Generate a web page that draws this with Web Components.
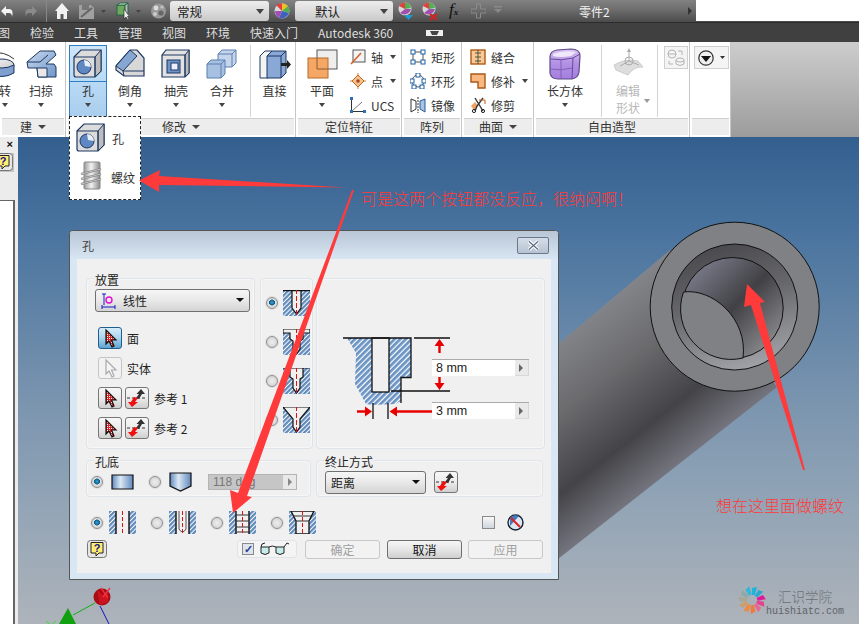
<!DOCTYPE html>
<html>
<head>
<meta charset="utf-8">
<style>
  html,body{margin:0;padding:0;}
  body{
    width:859px;height:624px;overflow:hidden;position:relative;
    display:flex;flex-direction:column;
    font:12px "Noto Sans CJK SC","Liberation Sans",sans-serif;color:#333;
  }
</style>
</head>
<body>
<cad-titlebar>
  <cad-icon name="undo" style="margin-left:0"></cad-icon>
  <cad-icon name="redo" style="margin-left:11px"></cad-icon>
  <span style="margin-left:8px;width:1px;height:22px;background:#888"></span>
  <cad-icon name="home" style="margin-left:8px"></cad-icon>
  <cad-icon name="save" style="margin-left:9px"></cad-icon>
  <cad-icon name="dd" style="margin-left:6px"></cad-icon>
  <cad-icon name="box" style="margin-left:10px"></cad-icon>
  <cad-icon name="dd" style="margin-left:7px"></cad-icon>
  <cad-icon name="ball" style="margin-left:10px"></cad-icon>
  <tb-combo style="margin-left:4px;width:99px;padding-left:7px">常规</tb-combo>
  <cad-icon name="wheel" style="margin-left:5px"></cad-icon>
  <tb-combo style="margin-left:5px;width:98px;padding-left:20px">默认</tb-combo>
  <cad-icon name="wheel2" style="margin-left:5px"></cad-icon>
  <cad-icon name="wheel3" style="margin-left:8px"></cad-icon>
  <cad-icon name="fx" style="margin-left:11px"></cad-icon>
  <cad-icon name="plus" style="margin-left:10px"></cad-icon>
  <cad-icon name="ddline" style="margin-left:8px"></cad-icon>
  <span style="margin-left:77px;width:32px;flex:none;white-space:nowrap;color:#f2f2f2">零件2</span>
  <cad-icon name="tri" style="margin-left:77px"></cad-icon>
</cad-titlebar>

<cad-tabs>
  <span style="margin-left:-2px">图</span><span>检验</span><span>工具</span><span>管理</span><span>视图</span><span>环境</span><span>快速入门</span><span>Autodesk 360</span>
  <cad-icon name="tabcam" style="margin-left:12px"></cad-icon>
</cad-tabs>

<cad-ribbon>
  <rb-panel label="建" dropdown style="width:66px" align="end">
    <rb-big label="转" arrow width="28"><cad-icon name="revolve"></cad-icon></rb-big>
    <rb-big label="扫掠" arrow width="44" style="margin-right:2px"><cad-icon name="sweep"></cad-icon></rb-big>
  </rb-panel>
  <rb-panel label="修改" dropdown style="width:230px">
    <rb-big label="孔" arrow width="38" active style="margin-left:3px"><cad-icon name="hole"></cad-icon></rb-big>
    <rb-big label="倒角" arrow width="46"><cad-icon name="chamfer"></cad-icon></rb-big>
    <rb-big label="抽壳" arrow width="46"><cad-icon name="shell"></cad-icon></rb-big>
    <rb-big label="合并" arrow width="46"><cad-icon name="combine"></cad-icon></rb-big>
    <rb-sep></rb-sep>
    <rb-big label="直接" width="43"><cad-icon name="direct"></cad-icon></rb-big>
  </rb-panel>
  <rb-panel label="定位特征" style="width:106px">
    <rb-big label="平面" arrow width="52"><cad-icon name="plane"></cad-icon></rb-big>
    <rb-col style="margin-left:2px">
      <rb-small label="轴" arrow><cad-icon name="axis"></cad-icon></rb-small>
      <rb-small label="点" arrow><cad-icon name="point"></cad-icon></rb-small>
      <rb-small label="UCS"><cad-icon name="ucs"></cad-icon></rb-small>
    </rb-col>
  </rb-panel>
  <rb-panel label="阵列" style="width:60px" pad="8">
    <rb-col>
      <rb-small label="矩形"><cad-icon name="rect"></cad-icon></rb-small>
      <rb-small label="环形"><cad-icon name="circ"></cad-icon></rb-small>
      <rb-small label="镜像"><cad-icon name="mirror"></cad-icon></rb-small>
    </rb-col>
  </rb-panel>
  <rb-panel label="曲面" dropdown style="width:72px" pad="8">
    <rb-col>
      <rb-small label="缝合"><cad-icon name="stitch"></cad-icon></rb-small>
      <rb-small label="修补" arrow><cad-icon name="patch"></cad-icon></rb-small>
      <rb-small label="修剪"><cad-icon name="trim"></cad-icon></rb-small>
    </rb-col>
  </rb-panel>
  <rb-panel label="自由造型" style="width:156px">
    <rb-big label="长方体" arrow width="62"><cad-icon name="freebox"></cad-icon></rb-big>
    <rb-sep></rb-sep>
    <rb-big label="编辑" second="形状" disabled width="48"><cad-icon name="editform"></cad-icon></rb-big>
    <rb-sep></rb-sep>
    <rb-tool style="margin-left:4px;width:24px"><cad-icon name="convert"></cad-icon></rb-tool>
  </rb-panel>
  <rb-panel label="&nbsp;" style="width:41px">
    <rb-tool style="margin-left:4px;width:35px"><cad-icon name="more"></cad-icon></rb-tool>
  </rb-panel>
</cad-ribbon>

<cad-workspace>
  <hole-dialog></hole-dialog>
</cad-workspace>

<rb-menu></rb-menu>
<anno-layer></anno-layer>

<script>
const OUT = '#1c3660';
const FACE = `<linearGradient id="f" x1="0" y1="0" x2="1" y2="1"><stop offset="0" stop-color="#f4f4f4"/><stop offset="1" stop-color="#c8c8c8"/></linearGradient>
  <linearGradient id="b" x1="0" y1="0" x2="1" y2="1"><stop offset="0" stop-color="#c9d9ee"/><stop offset="1" stop-color="#6f95c8"/></linearGradient>`;
const svg = (w, h, body, vb) => `<svg width="${w}" height="${h}" viewBox="${vb || `0 0 ${w} ${h}`}" xmlns="http://www.w3.org/2000/svg"><defs>${FACE}</defs>${body}</svg>`;
const HATCH = `<pattern id="h" width="3.2" height="3.2" patternUnits="userSpaceOnUse" patternTransform="rotate(45)"><rect width="3.2" height="3.2" fill="#fff"/><rect width="2.2" height="3.2" fill="#5f8abb"/></pattern>`;
const PICK = (c1, c2) => `<path d="M5 2 L5 16 L8 13 L11 19 L13 18 L10.5 12 L15 12 Z" fill="${c1}" stroke="${c2}" stroke-width="1.2"/>`;

const ICONS = {
  undo: svg(14, 22, `<path d="M6 6 L1 11 L6 16 V13 H9 Q12 13 12 17 Q14 9 9 9 H6Z" fill="#f4f4f4"/>`),
  redo: svg(13, 22, `<path d="M7 6 L12 11 L7 16 V13 H4 Q1 13 1 17 Q-1 9 4 9 H7Z" fill="#8a8a8a"/>`),
  home: svg(14, 22, `<path d="M7 3 L14 11 H12 V19 H8.5 V14 H5.5 V19 H2 V11 H0Z" fill="#f2f2f2"/>`),
  save: svg(17, 22, `<path d="M1 5 H13 L16 8 V19 H1Z" fill="#a0a0a0"/><rect x="4" y="5" width="7" height="5" fill="#777"/><path d="M3 17 L14 8" stroke="#666" stroke-width="2"/>`),
  dd: svg(5, 22, `<path d="M0 10 H5 L2.5 13Z" fill="#444"/>`),
  ddline: svg(8, 22, `<path d="M0 6 H8 V7.5 H0Z M0 9 H8 L4 13Z" fill="#888"/>`),
  tri: svg(5, 22, `<path d="M0 7 L4 11 L0 15Z" fill="#333"/>`),
  box: svg(13, 22, `<rect x="1" y="5" width="8" height="10" fill="#70a860" stroke="#264"/><path d="M1 5 L4 3 H12 L9 5Z" fill="#dce8d0" stroke="#264"/><path d="M9 5 L12 3 V13 L9 15Z" fill="#bbb" stroke="#264"/><path d="M8 9 V19 L10 17 L12 20 L13 19 L11.5 16.5 H13.5Z" fill="#eee" stroke="#222" stroke-width=".6"/>`),
  ball: svg(15, 22, `<circle cx="7.5" cy="11" r="7.5" fill="#999"/><circle cx="5" cy="8" r="2.4" fill="#ddd"/><circle cx="10" cy="13" r="2.6" fill="#666"/><circle cx="4" cy="14" r="2" fill="#ccc"/><circle cx="11" cy="7" r="1.6" fill="#c4c4c4"/>`),
  wheel: svg(16, 22, `<circle cx="8" cy="11" r="7.5" fill="#d8d8d8"/><path d="M8 11 L2 5 A8 8 0 0 1 8 3.5Z" fill="#e04040"/><path d="M8 11 V3.5 A8 8 0 0 1 14 6Z" fill="#f0c020"/><path d="M8 11 L14 6 A8 8 0 0 1 15 13Z" fill="#50b050"/><path d="M8 11 L15 13 A8 8 0 0 1 5 18Z" fill="#4060c0"/><path d="M8 11 L5 18 A8 8 0 0 1 1 11Z" fill="#a050b0"/>`),
  wheel2: svg(15, 22, `<circle cx="7" cy="9" r="6.5" fill="#d8d8d8"/><path d="M7 9 L1 6 A7 7 0 0 1 7 2.5Z" fill="#e04040"/><path d="M7 9 V2.5 A7 7 0 0 1 13 8Z" fill="#50b050"/><path d="M7 9 H13 A7 7 0 0 1 2 13Z" fill="#a050b0"/><path d="M6 15 H15 L10.5 20Z" fill="#1e9ad0"/>`),
  wheel3: svg(17, 22, `<circle cx="8" cy="9" r="6.5" fill="#d8d8d8"/><path d="M8 9 L2 6 A7 7 0 0 1 8 2.5Z" fill="#e04040"/><path d="M8 9 V2.5 A7 7 0 0 1 14 8Z" fill="#50b050"/><path d="M8 9 H14 A7 7 0 0 1 3 13Z" fill="#a050b0"/><path d="M9 14 L16 20 M16 14 L9 20" stroke="#d82020" stroke-width="2"/>`),
  fx: `<span style="font:italic 17px 'Liberation Serif',serif;color:#111;width:12px;line-height:20px;white-space:nowrap">f<span style="font-size:9px;font-weight:bold">x</span></span>`,
  plus: svg(15, 22, `<path d="M5.5 4 H9.5 V9 H15 V13 H9.5 V18 H5.5 V13 H0 V9 H5.5Z" fill="none" stroke="#8a8a8a"/>`),
  tabcam: svg(19, 10, `<path d="M1 2 H18 V8 H1Z" fill="#eee" rx="2"/><path d="M5 3 H14 L12 7 H7Z" fill="#444"/>`),

  revolve: svg(30, 30, `<g transform="translate(10,0)"><ellipse cx="2" cy="16" rx="12" ry="6" fill="url(#f)" stroke="${OUT}"/><path d="M-10 16 V24 Q2 31 14 24 V16 Q2 22 -10 16Z" fill="#7f9fcf" stroke="${OUT}"/><path d="M-8 4 Q4 2 14 10" fill="none" stroke="#333"/></g>`),
  sweep: svg(31, 30, `<path d="M1 13 L14 2 H28 L30 6 L20 15 H28 L30 18 V28 H12 L11 19 H2Z" fill="url(#b)" stroke="${OUT}"/><path d="M11 19 H21 V28 H12Z" fill="#e8e8e8" stroke="${OUT}"/><path d="M1 13 H14 L22 6" fill="none" stroke="${OUT}"/>`),
  hole: svg(30, 30, `<path d="M1 8 L8 1 H28 V22 L22 28 H3 Q1 28 1 26Z" fill="#dcdcdc" stroke="${OUT}" stroke-width="1.2"/><path d="M22 8 L28 1 V22 L22 28Z" fill="#bdbdbd" stroke="${OUT}"/><path d="M1 8 H22 V28" fill="none" stroke="${OUT}"/><circle cx="11" cy="18" r="7" fill="#5f87c3" stroke="${OUT}"/><path d="M11 11 A7 7 0 0 1 18 18 L12 17Z" fill="#e8eef6"/>`),
  chamfer: svg(30, 30, `<path d="M1 17 L15 1 H22 L29 9 V27 H9 L1 21Z" fill="#d8d8d8" stroke="${OUT}" stroke-width="1.2"/><path d="M1 17 L15 1 L22 7 L8 22Z" fill="#88a6d2" stroke="${OUT}"/><path d="M8 22 H29 M8 22 L9 27" fill="none" stroke="${OUT}"/>`),
  shell: svg(30, 30, `<path d="M1 6 L5 1 H28 V24 L24 28 H1Z" fill="#e2e2e2" stroke="${OUT}" stroke-width="1.2"/><path d="M24 6 L28 1 V24 L24 28Z" fill="#bcbcbc" stroke="${OUT}"/><path d="M1 6 H24 V28" fill="none" stroke="${OUT}"/><rect x="6" y="11" width="13" height="13" fill="#6f95c8" stroke="${OUT}"/><rect x="10" y="14" width="7" height="7" fill="#eef" stroke="${OUT}"/>`),
  combine: svg(32, 30, `<path d="M12 5 L16 1 H30 V14 L26 18 H12Z" fill="#c5d6ec" stroke="#5a7fb0"/><path d="M1 15 L5 11 H19 V25 L15 29 H1Z" fill="#a6c0e2" stroke="#5a7fb0"/><path d="M1 15 H15 V29 M15 15 L19 11 M12 5 H26 V18 M26 5 L30 1" fill="none" stroke="#5a7fb0"/>`),
  direct: svg(32, 30, `<path d="M1 7 L6 2 H13 L9 7 V29 H1Z" fill="#f4f4f4" stroke="${OUT}"/><path d="M8 7 L13 2 H27 V24 L22 29 H8Z" fill="#89a8d6" stroke="${OUT}"/><path d="M8 7 H22 V29 M22 7 L27 2" fill="none" stroke="${OUT}"/><path d="M22 14 H28 V11 L32 15.5 L28 20 V17 H22Z" fill="#222"/>`),
  plane: svg(31, 30, `<rect x="10" y="1" width="20" height="19" fill="#eee" stroke="#555"/><rect x="1" y="9" width="20" height="20" fill="#f5a765" stroke="#b86a28"/><path d="M10 9 V20 H21" fill="none" stroke="#8a5a30"/>`),
  axis: svg(16, 16, `<rect x="3" y="1" width="12" height="12" fill="#f4f4f4" stroke="#555"/><path d="M1 15 L11 4" stroke="#d8622a" stroke-width="1.6"/>`),
  point: svg(16, 18, `<path d="M8 1 V17 M0 9 H16" stroke="#e08030" stroke-width="1"/><path d="M8 3 L14 9 L8 15 L2 9Z" fill="#f5c090" stroke="#c06820"/><circle cx="8" cy="9" r="1.8" fill="#a84818"/>`),
  ucs: svg(16, 16, `<path d="M1.5 1 V14.5 H15" fill="none" stroke="#333"/><path d="M2 14 L12 5" stroke="#777"/><rect x="0" y="0" width="3" height="3" fill="#2a6fb8"/><rect x="0" y="13" width="3" height="3" fill="#2a6fb8"/><rect x="13" y="13" width="3" height="3" fill="#2a6fb8"/>`),
  rect: svg(16, 16, `<path d="M3 3 H13 M3 13 H13 M3 3 V13 M13 3 V13" stroke="#555"/><g fill="#fff" stroke="#1c5fa8"><rect x="1" y="1" width="4" height="4"/><rect x="11" y="1" width="4" height="4"/><rect x="1" y="11" width="4" height="4"/><rect x="11" y="11" width="4" height="4"/></g>`),
  circ: svg(16, 16, `<circle cx="8" cy="8" r="6" fill="none" stroke="#555"/><g fill="#fff" stroke="#1c5fa8"><rect x="6" y="0" width="4" height="4"/><rect x="0" y="6" width="4" height="4"/><rect x="12" y="6" width="4" height="4"/><rect x="2" y="12" width="4" height="4"/><rect x="10" y="12" width="4" height="4"/></g>`),
  mirror: svg(16, 16, `<path d="M1 2 L6 4 V12 L1 15Z" fill="#fff" stroke="#333"/><path d="M15 2 L10 4 V12 L15 15Z" fill="#a8c4e6" stroke="#2a5a98"/><path d="M8 0 V16" stroke="#333" stroke-dasharray="2 1"/>`),
  stitch: svg(16, 16, `<rect x="1" y="1" width="14" height="14" fill="#f8c898" stroke="#b05a18" stroke-width="1.4"/><path d="M8 1 V15 M5 4 H11 M5 8 H11 M5 12 H11" stroke="#553"/>`),
  patch: svg(16, 16, `<path d="M1 1 H15 V15 H8 V9 H1Z" fill="#f8b880" stroke="#a85a18" stroke-width="1.4"/>`),
  trim: svg(16, 16, `<path d="M1 9 L5 5 L8 9 L4 13Z" fill="#f0a060"/><path d="M5 1 L13 14 M13 1 L7 9 L5 14" fill="none" stroke="#333" stroke-width="1.4"/><circle cx="13" cy="14" r="1.6" fill="none" stroke="#222"/><circle cx="4" cy="14" r="1.6" fill="none" stroke="#222"/><path d="M9 3 H15 V7" fill="none" stroke="#c06020"/>`),
  freebox: svg(32, 32, `<linearGradient id="p" x1="0" y1="0" x2="0" y2="1"><stop offset="0" stop-color="#d8c6f2"/><stop offset=".45" stop-color="#b492e6"/><stop offset="1" stop-color="#a47ee0"/></linearGradient><path d="M1 9 Q1 3 8 2 L22 1 Q31 1 31 8 L30 24 Q29 30 23 31 L9 31 Q2 31 1 25Z" fill="url(#p)" stroke="#5d4a86" stroke-width="1.2"/><path d="M2 11 Q12 13 24 10 L31 6 M24 10 L23 31" fill="none" stroke="#6a4a9a"/><path d="M1 21 Q12 23 23 20 M12 12 V31" fill="none" stroke="#7f63ad"/><path d="M4 6 Q14 2 27 4 L22 8 Q11 10 4 8Z" fill="#efe8fa"/>`),
  editform: svg(32, 32, `<path d="M2 17 Q14 10 26 13 L31 19 Q22 18 16 27 L4 22Z" fill="#ddd" stroke="#ccc"/><circle cx="17" cy="13" r="4" fill="none" stroke="#aaa"/><path d="M17 2 V13 M17 13 L8 18 M17 13 L27 17" stroke="#aaa"/><path d="M15 4 L17 0 L19 4Z" fill="#aaa"/>`),
  convert: svg(20, 20, `<g fill="none" stroke="#b4b4b4"><circle cx="6" cy="6" r="4"/><path d="M2 6 H10"/><ellipse cx="14" cy="12" rx="4" ry="2"/><path d="M10 12 V16 Q14 19 18 16 V12"/><path d="M12 3 H16 V7 M3 13 V16 H7"/></g>`),
  more: `<span style="display:inline-flex;align-items:center;gap:6px">${svg(16, 16, `<circle cx="8" cy="8" r="7.2" fill="#eee" stroke="#333" stroke-width="1.2"/><path d="M3 6 H13 L8 12Z" fill="#111"/>`)}<svg width="5" height="3"><path d="M0 0 H5 L2.5 3Z" fill="#333"/></svg></span>`,
  thread: svg(22, 30, `<defs><linearGradient id="c"><stop offset="0" stop-color="#999"/><stop offset=".45" stop-color="#f2f2f2"/><stop offset="1" stop-color="#8a8a8a"/></linearGradient></defs><rect x="4" y="1" width="16" height="27" rx="1" fill="url(#c)" stroke="#888"/><path d="M1 13 L21 8 M1 18 L21 13 M1 23 L21 18" stroke="#777" stroke-width="2.2"/><path d="M1 13 L21 8 M1 18 L21 13 M1 23 L21 18" stroke="#ddd" stroke-width=".8"/>`),

  pick: svg(18, 20, `<pattern id="r" width="2" height="2" patternUnits="userSpaceOnUse"><rect width="2" height="2" fill="#e02020"/><rect width="1" height="1" fill="#fff"/></pattern>${PICK('url(#r)', '#111')}`),
  pickoff: svg(18, 20, PICK('#f4f4f4', '#aaa')),
  flip: svg(20, 20, `<path d="M0 10 H20" stroke="#333" stroke-dasharray="3 2"/><path d="M9 10 L12 6 H9.5 L14 1 L18 6 H15 L12 11Z" fill="#333"/><path d="M11 10 L8 14 H11 L5 19 L1 14 H4 L7 9Z" fill="#ee1010"/>`),
  linear: svg(16, 16, `<path d="M1 1 H5 M3 1 V12 M1 14 H14 M1 12 V16 M14 12 V16" stroke="#1818c8" fill="none"/><circle cx="8" cy="7" r="3" fill="none" stroke="#e010d0" stroke-width="1.4"/>`),
  help: svg(20, 18, `<rect x=".5" y=".5" width="19" height="17" rx="3" fill="#e6e6e6" stroke="#777"/><path d="M4 2.5 H16 V13 H12 L9 16 V13 H4Z" fill="#ffee70" stroke="#222"/><text x="10" y="11.5" text-anchor="middle" font-family="Liberation Sans" font-weight="bold" font-size="11" fill="#14148c">?</text>`),
  glasses: svg(30, 14, `<path d="M9 5 Q12 3 16 5 M24 5 L27 1 L29 2" fill="none" stroke="#222"/><path d="M1 5 H9 V11 Q5 14 1 11Z M16 5 H24 V11 Q20 14 16 11Z" fill="#c8ecec" stroke="#222"/><path d="M1 5 Q1 1 5 1" fill="none" stroke="#222"/>`),
  nothrough: svg(17, 17, `<circle cx="8.5" cy="8.5" r="7.5" fill="#dbe6f2" stroke="#123" stroke-width="1.4"/><path d="M3 4 A7 7 0 0 1 12 2 L3 12Z" fill="#4a78b8"/><path d="M4 4 L13 13" stroke="#e02020" stroke-width="2"/>`),

  flat: svg(23, 16, `<linearGradient id="g"><stop offset="0" stop-color="#5f89bd"/><stop offset=".4" stop-color="#dce8f4"/><stop offset="1" stop-color="#5f89bd"/></linearGradient><path d="M1 1 H22 V15 H1Z" fill="url(#g)" stroke="#111" stroke-width="1.2"/>`),
  drill: svg(23, 20, `<linearGradient id="g"><stop offset="0" stop-color="#5f89bd"/><stop offset=".4" stop-color="#dce8f4"/><stop offset="1" stop-color="#5f89bd"/></linearGradient><path d="M1 1 H22 V14 L11.5 19 L1 14Z" fill="url(#g)" stroke="#111" stroke-width="1.2"/>`),

  h1: svg(27, 26, `${HATCH}<rect width="27" height="26" fill="url(#h)"/><path d="M0 .6 H27 M9 0 V18 L13.5 24 L18 18 V0Z" fill="#f0f0f0" stroke="#111" stroke-width="1.2"/><path d="M13.5 -1 V26" stroke="#e01010" stroke-dasharray="5 2"/>`),
  h2: svg(27, 26, `${HATCH}<rect width="27" height="26" fill="url(#h)"/><path d="M0 0 H27 V4 H20 V10 L17 12 V20 L13.5 25 L10 20 V12 L7 10 V4 H0Z" fill="#f0f0f0" stroke="#111" stroke-width="1.2"/><path d="M13.5 -1 V26" stroke="#e01010" stroke-dasharray="5 2"/>`),
  h3: svg(27, 26, `${HATCH}<rect width="27" height="26" fill="url(#h)"/><path d="M0 0 H27 L20 0 V9 L17 11 V20 L13.5 25 L10 20 V11 L7 9 V0Z" fill="#f0f0f0" stroke="#111" stroke-width="1.2"/><path d="M13.5 -1 V26" stroke="#e01010" stroke-dasharray="5 2"/>`),
  h4: svg(27, 26, `${HATCH}<rect width="27" height="26" fill="url(#h)"/><path d="M0 0 H27 L17 12 V20 L13.5 25 L10 20 V12Z" fill="#f0f0f0" stroke="#111" stroke-width="1.2"/><path d="M13.5 -1 V26" stroke="#e01010" stroke-dasharray="5 2"/>`),
  t1: svg(27, 23, `${HATCH}<rect width="7" height="23" fill="url(#h)"/><rect x="20" width="7" height="23" fill="url(#h)"/><path d="M7 0 V23 M20 0 V23" stroke="#111" stroke-width="1.4"/><path d="M13.5 0 V23" stroke="#e01010" stroke-dasharray="4 2"/>`),
  t2: svg(27, 23, `${HATCH}<rect width="7" height="23" fill="url(#h)"/><rect x="20" width="7" height="23" fill="url(#h)"/><path d="M7 0 V23 M20 0 V23" stroke="#111" stroke-width="1.4"/><path d="M10 0 V18 Q13.5 24 17 18 V0" fill="none" stroke="#555"/><path d="M13.5 0 V23" stroke="#e01010" stroke-dasharray="4 2"/>`),
  t3: svg(27, 23, `${HATCH}<rect width="7" height="23" fill="url(#h)"/><rect x="20" width="7" height="23" fill="url(#h)"/><path d="M7 0 V23 M20 0 V23" stroke="#111" stroke-width="1.4"/><path d="M7 4 H20 M7 10 H20 M7 16 H20 M7 21 H20" stroke="#333"/><path d="M13.5 0 V23" stroke="#e01010" stroke-dasharray="4 2"/>`),
  t4: svg(27, 23, `${HATCH}<rect width="27" height="23" fill="url(#h)"/><path d="M2 0 H25 L20 10 V23 H7 V10Z" fill="#f0f0f0" stroke="#111" stroke-width="1.3"/><path d="M5 5 H22 M7 10 H20" stroke="#333"/><path d="M13.5 0 V23" stroke="#e01010" stroke-dasharray="4 2"/>`)
};

// small helper so each element below only has to give its css and markup
function define(tag, css, html) {
  customElements.define(tag, class extends HTMLElement {
    constructor() {
      super();
      this.attachShadow({mode: 'open'});
    }
    connectedCallback() {
      this.shadowRoot.innerHTML = `<style>${css}</style>` + (typeof html === 'function' ? html(this) : html);
    }
  });
}

define('cad-icon', `:host{display:inline-flex;flex:none;align-items:center;line-height:0;} svg{display:block;overflow:hidden;}`,
  el => ICONS[el.getAttribute('name')] || '');

define('cad-titlebar', `
  :host{
    display:flex;flex:none;align-items:center;height:22px;border-bottom:1px solid #2c2c2c;position:relative;
    background:linear-gradient(#828282,#6c6c6c 45%,#4c4c4c);
    font-size:12px;
  }
  .white{position:absolute;left:696px;right:0;top:0;height:21px;background:#fff;}
`, `<slot></slot><div class="white"></div>`);

define('tb-combo', `
  :host{
    display:flex;align-items:center;box-sizing:border-box;height:20px;position:relative;flex:none;
    background:linear-gradient(#ededed,#dcdcdc 50%,#c9c9c9);border-radius:3px;color:#222;font-size:12.5px;
  }
  :host::after{content:"";position:absolute;right:5px;top:8px;border:4px solid transparent;border-top:5px solid #444;border-bottom:0;}
`, `<slot></slot>`);

define('cad-tabs', `
  :host{
    display:flex;flex:none;align-items:center;gap:20px;height:19px;background:#404040;color:#dedede;overflow:hidden;white-space:nowrap;
  }
`, `<slot></slot>`);

define('cad-ribbon', `
  :host{
    display:flex;flex:none;height:95px;
    background:linear-gradient(#cdcdcd,#9c9c9c);
    border-bottom:0;
  }
`, `<slot></slot>`);

define('rb-panel', `
  :host{
    display:flex;flex-direction:column;flex:none;box-sizing:border-box;background:#fff;border-right:1px solid #c6c6c6;
  }
  .body{flex:1;display:flex;align-items:flex-start;padding-top:3px;min-height:0;overflow:hidden;}
  .title{
    height:17px;margin:0 1px 2px 2px;background:#ededed;border-top:1px solid #cfcfcf;box-sizing:border-box;
    display:flex;align-items:center;justify-content:center;gap:6px;color:#333;line-height:16px;white-space:nowrap;
  }
  .tri{width:0;height:0;border:4px solid transparent;border-top:4px solid #444;border-bottom:0;}
`, el => `
  <div class="body" style="${el.getAttribute('align') === 'end' ? 'justify-content:flex-end;' : ''}padding-left:${el.getAttribute('pad') || 0}px"><slot></slot></div>
  <div class="title">${el.getAttribute('label')}${el.hasAttribute('dropdown') ? '<span class="tri"></span>' : ''}</div>`);

define('rb-big', `
  :host{display:flex;flex:none;flex-direction:column;align-items:center;box-sizing:border-box;height:72px;padding-top:4px;position:relative;white-space:nowrap;}
  :host([active]){background:linear-gradient(#cfe6f8,#bcdcf5 45%,#a9cdee);box-shadow:inset 0 0 0 1px #2f7fc6;}
  :host([active])::before{content:"";position:absolute;left:0;right:0;top:36px;height:1px;background:#2f7fc6;}
  :host([disabled]){color:#b8b8b8;}
  .ic{height:30px;display:flex;align-items:center;justify-content:center;}
  .lb{margin-top:4px;height:16px;line-height:16px;}
  .lb2{height:17px;line-height:17px;margin-top:0;}
  .ar{margin-top:4px;width:0;height:0;border:3px solid transparent;border-top:4px solid #444;border-bottom:0;}
  .sar{position:absolute;right:2px;top:54px;width:0;height:0;border:3px solid transparent;border-top:4px solid #999;border-bottom:0;}
`, el => `<div class="ic"><slot></slot></div><div class="lb">${el.getAttribute('label')}</div>
  ${el.getAttribute('second') ? `<div class="lb2">${el.getAttribute('second')}</div><span class="sar"></span>` : ''}
  ${el.hasAttribute('arrow') ? '<span class="ar"></span>' : ''}
  <style>:host{width:${el.getAttribute('width')}px}</style>`);

define('rb-sep', `:host{display:block;flex:none;width:1px;height:72px;background:#d4d4d4;margin:0 2px 0 5px;}`, ``);
define('rb-col', `:host{display:flex;flex-direction:column;flex:none;}`, `<slot></slot>`);
define('rb-small', `
  :host{display:flex;align-items:center;height:24px;gap:5px;white-space:nowrap;}
  .ar{margin-left:2px;width:0;height:0;border:3px solid transparent;border-top:4px solid #444;border-bottom:0;}
  .ic{width:16px;display:flex;justify-content:center;}
`, el => `<span class="ic"><slot></slot></span><span>${el.getAttribute('label')}</span>${el.hasAttribute('arrow') ? '<span class="ar"></span>' : ''}`);
define('rb-tool', `
  :host{display:flex;flex:none;align-items:center;justify-content:center;box-sizing:border-box;height:23px;border:1px solid #d0d0d0;background:#f4f4f4;margin-top:1px;}
`, `<slot></slot>`);

define('rb-menu', `
  :host{position:absolute;left:69px;top:116px;width:72px;height:84px;box-sizing:border-box;background:#fff;border:1px dashed #222;display:flex;flex-direction:column;gap:9px;padding:6px 0 0 6px;}
  .row{display:flex;align-items:center;gap:6px;height:30px;}
  .th{width:22px;margin-left:4px;}
`, `<div class="row"><cad-icon name="hole"></cad-icon><span>孔</span></div>
    <div class="row"><span class="th"><cad-icon name="thread"></cad-icon></span><span style="margin-left:3px">螺纹</span></div>`);

define('cad-workspace', `
  :host{display:flex;flex:1;min-height:0;position:relative;background:#e4e4e4;}
  .side{width:18px;flex:none;display:flex;flex-direction:column;background:#ececec;overflow:hidden;}
  .x{height:16px;text-align:right;padding-right:5px;font:bold 11px/15px "Liberation Sans",sans-serif;color:#111;}
  .q{height:19px;width:14px;background:#c4c4c4;overflow:hidden;}
  .q cad-icon{margin-left:-7px;}
  .tree{flex:1;margin-top:28px;width:13px;background:#fff;border:solid #666;border-width:1px 2px 0 0;}
  .view{flex:1;position:relative;overflow:hidden;background:linear-gradient(#335f8f,#4a749f 20%,#7b95af 55%,#8ea2b5 72%,#aeb3ba);}
  svg{position:absolute;left:0;top:0;}
`, `<div class="side"><div class="x">×</div><div class="q"><cad-icon name="help"></cad-icon></div><div class="tree"></div></div>
  <div class="view">
    <svg width="841" height="487" viewBox="18 137 841 487" xmlns="http://www.w3.org/2000/svg">
      <defs>
        <linearGradient id="body" gradientUnits="userSpaceOnUse" x1="670" y1="250" x2="777" y2="387">
          <stop offset="0" stop-color="#84858a"/><stop offset=".35" stop-color="#6b6b6e"/><stop offset=".72" stop-color="#444448"/><stop offset="1" stop-color="#74747e"/>
        </linearGradient>
        <linearGradient id="mid" x1=".3" y1="0" x2=".6" y2="1"><stop offset="0" stop-color="#48484c"/><stop offset=".45" stop-color="#68686c"/><stop offset="1" stop-color="#a2a3a8"/></linearGradient>
        <linearGradient id="inn" x1=".1" y1=".1" x2=".9" y2=".9"><stop offset="0" stop-color="#7c7d8c"/><stop offset=".5" stop-color="#414145"/><stop offset="1" stop-color="#8d8d92"/></linearGradient>
      </defs>
      <path d="M670 250 L777 387 L558 559 H500 V393Z" fill="url(#body)"/>
      <circle cx="734.7" cy="306.7" r="84.5" fill="#808184" stroke="#111"/>
      <circle cx="734.7" cy="307" r="63" fill="url(#mid)" stroke="#111"/>
      <circle cx="732.7" cy="308" r="50.5" fill="url(#inn)" stroke="#111"/>
      <path d="M683.5 292 C712 288 748 318 743 358 A50.5 50.5 0 0 1 683.5 292Z" fill="#808184" stroke="#111"/>
      <path d="M73 615 L95 603" stroke="#10b010"/><path d="M100 606 L110 626" stroke="#1010c0"/>
      <path d="M59 624 L68 608 L76 624Z" fill="#10a010"/><path d="M46 621 L52 626 M56 621 L50 626" stroke="#30e030"/>
      <circle cx="102" cy="597" r="8.5" fill="#a80c14"/><path d="M97 590 L103 595 L108 592 L108 602 L100 605Z" fill="#cc1420"/>
      <path d="M101 588 L108 598 M110 588 L103 597" stroke="#f03040" stroke-width="1.4"/>
    </svg>
    <slot></slot>
  </div>`);

define('hole-dialog', `
  :host{
    position:absolute;left:51px;top:93px;width:490px;height:350px;box-sizing:border-box;
    display:flex;flex-direction:column;border:1px solid #555;border-radius:4px 4px 0 0;
    background:#d9e6f3;font-size:12px;color:#222;
  }
  .head{height:28px;flex:none;display:flex;align-items:center;justify-content:space-between;padding:0 9px 0 12px;
    background:linear-gradient(#b9c6d6,#d8e5f2);color:#444;border-radius:3px 3px 0 0;}
  .close{width:30px;height:15px;border:1px solid #69788c;border-radius:2px;background:linear-gradient(#d5dde7,#b7c3d2);display:flex;justify-content:center;align-items:center;}
  .body{flex:1;margin:0 7px 6px 7px;background:#f0f0f0;padding:19px 7px 0 9px;box-sizing:border-box;}
  .r1,.r2{display:flex;}
  .r1{height:171px;}
  .r2{margin-top:11px;height:37px;}
  .place{width:169px;margin-right:5px;display:flex;flex-direction:column;padding:10px 0 0 8px;box-sizing:border-box;}
  .row{display:flex;align-items:center;gap:3px;height:22px;margin-bottom:8px;padding-left:3px;}
  .row span{margin-left:2px;}
  .types{width:53px;margin-right:3px;display:flex;flex-direction:column;gap:13px;padding:11px 0 0 5px;box-sizing:border-box;}
  .t{display:flex;align-items:center;gap:5px;height:26px;}
  .diag{width:227px;position:relative;}
  .diag svg{position:absolute;left:0;top:0;}
  value-field{position:absolute;left:115px;}
  .bottom{width:225px;margin-right:5px;display:flex;align-items:center;padding:7px 0 0 4px;box-sizing:border-box;}
  .end{width:227px;display:flex;align-items:center;gap:8px;padding:7px 0 0 8px;box-sizing:border-box;}
  .spin{margin-left:16px;width:89px;height:16px;background:#c6c6c6;border:1px solid #b4b4b4;box-sizing:border-box;font:12px/14px "Liberation Sans",sans-serif;color:#777;padding-left:4px;position:relative;}
  .spin::after{content:"";position:absolute;right:0;top:0;bottom:0;width:13px;background:#e8e8e8;}
  .spin i{position:absolute;right:4px;top:3px;z-index:1;border:4px solid transparent;border-left:4px solid #888;border-right:0;}
  .r3{display:flex;align-items:center;margin-top:14px;height:23px;padding-left:5px;position:relative;}
  .r3 .t{gap:6px;width:60px;height:23px;flex:none;}
  .chk{width:13px;height:13px;box-sizing:border-box;border:1px solid #8a8a8a;background:linear-gradient(#f8f8f8,#cfd6de);flex:none;}
  .r4{display:flex;align-items:center;margin-top:5px;height:20px;}
  .gl{margin-left:130px;width:60px;height:18px;box-sizing:border-box;border:1px solid #e0e4e8;border-radius:3px;background:#f4f4f4;display:flex;align-items:center;gap:6px;padding-left:4px;}
  .gl b{width:12px;height:12px;box-sizing:border-box;border:1px solid #8a8a8a;background:#dde4ee;color:#2a3f8f;font:bold 11px/10px "Liberation Sans",sans-serif;text-align:center;}
  .btns{display:flex;gap:7px;margin-left:8px;}
`, `
  <div class="head"><span>孔</span><div class="close"><svg width="13" height="11"><path d="M2 1.5 L11 9.5 M11 1.5 L2 9.5" stroke="#fff" stroke-width="3.6"/><path d="M2 1.5 L11 9.5 M11 1.5 L2 9.5" stroke="#5a6a80" stroke-width="1.2"/></svg></div></div>
  <div class="body">
    <div class="r1">
      <dlg-group class="place" label="放置">
        <dlg-combo style="width:155px;margin-bottom:15px"><cad-icon name="linear" style="margin-right:6px"></cad-icon>线性</dlg-combo>
        <div class="row"><tool-btn selected><cad-icon name="pick"></cad-icon></tool-btn><span>面</span></div>
        <div class="row"><tool-btn disabled><cad-icon name="pickoff"></cad-icon></tool-btn><span>实体</span></div>
        <div class="row"><tool-btn><cad-icon name="pick"></cad-icon></tool-btn><tool-btn><cad-icon name="flip"></cad-icon></tool-btn><span>参考 1</span></div>
        <div class="row"><tool-btn><cad-icon name="pick"></cad-icon></tool-btn><tool-btn><cad-icon name="flip"></cad-icon></tool-btn><span>参考 2</span></div>
      </dlg-group>
      <dlg-group class="types">
        <div class="t"><dlg-radio checked></dlg-radio><cad-icon name="h1"></cad-icon></div>
        <div class="t"><dlg-radio></dlg-radio><cad-icon name="h2"></cad-icon></div>
        <div class="t"><dlg-radio></dlg-radio><cad-icon name="h3"></cad-icon></div>
        <div class="t"><dlg-radio></dlg-radio><cad-icon name="h4"></cad-icon></div>
      </dlg-group>
      <dlg-group class="diag">
        <svg width="227" height="171" viewBox="316 278 227 171" xmlns="http://www.w3.org/2000/svg">
          <defs><pattern id="hh" width="4" height="4" patternUnits="userSpaceOnUse" patternTransform="rotate(45)"><rect width="4" height="4" fill="#fff"/><rect width="2.800" height="4" fill="#6b94c4"/></pattern></defs>
          <path d="M346 337 H410 V376.5 H400 V400 L394 403 L372 404 L365 403 L354 383 L355 352Z" fill="url(#hh)"/>
          <rect x="371" y="337" width="17" height="54" fill="#f0f0f0" stroke="#111" stroke-width="1.3"/>
          <path d="M342 337 H410 V376.5 H400 V402" fill="none" stroke="#111" stroke-width="1.3"/>
          <path d="M413 337 H449 M390 390 H449 M372 402 V418 M387 402 V418" stroke="#111" stroke-width="1.3"/>
          <path d="M438.5 352 V344 M438.5 376 V383" stroke="#e80000" stroke-width="2.4"/>
          <path d="M433.5 345 L438.5 338 L443.5 345Z M433.5 382 L438.5 389 L443.5 382Z" fill="#e80000"/>
          <path d="M356 410.5 H364 M431 410.5 H396" stroke="#e80000" stroke-width="2.6"/>
          <path d="M364 405.5 L371 410.5 L364 415.5Z M396 405.5 L388.500 410.5 L396 415.5Z" fill="#e80000"/>
        </svg>
        <value-field style="top:80px">8 mm</value-field>
        <value-field style="top:123px">3 mm</value-field>
      </dlg-group>
    </div>
    <div class="r2">
      <dlg-group class="bottom" label="孔底">
        <dlg-radio checked></dlg-radio><cad-icon name="flat" style="margin-left:8px"></cad-icon>
        <dlg-radio style="margin-left:15px"></dlg-radio><cad-icon name="drill" style="margin-left:8px"></cad-icon>
        <div class="spin">118 deg<i></i></div>
      </dlg-group>
      <dlg-group class="end" label="终止方式">
        <dlg-combo style="width:101px">距离</dlg-combo>
        <tool-btn><cad-icon name="flip"></cad-icon></tool-btn>
      </dlg-group>
    </div>
    <div class="r3">
      <div class="t"><dlg-radio checked></dlg-radio><cad-icon name="t1"></cad-icon></div>
      <div class="t"><dlg-radio></dlg-radio><cad-icon name="t2"></cad-icon></div>
      <div class="t"><dlg-radio></dlg-radio><cad-icon name="t3"></cad-icon></div>
      <div class="t"><dlg-radio></dlg-radio><cad-icon name="t4"></cad-icon></div>
      <div class="chk" style="margin-left:151px"></div>
      <cad-icon name="nothrough" style="margin-left:12px"></cad-icon>
    </div>
    <div class="r4">
      <cad-icon name="help" style="margin-left:1px"></cad-icon>
      <div class="gl"><b>✓</b><cad-icon name="glasses"></cad-icon></div>
      <div class="btns">
        <dlg-button disabled>确定</dlg-button>
        <dlg-button>取消</dlg-button>
        <dlg-button disabled style="margin-left:-1px">应用</dlg-button>
      </div>
    </div>
  </div>`);

define('dlg-group', `
  :host{display:block;flex:none;border:1px solid #dfe4ea;border-radius:4px;box-shadow:inset 0 0 0 1px #f7f7f7;position:relative;}
  .lg{position:absolute;left:7px;top:-6px;background:#f0f0f0;padding:0 1px;line-height:14px;color:#222;white-space:nowrap;}
`, el => `${el.getAttribute('label') ? `<span class="lg">${el.getAttribute('label')}</span>` : ''}<slot></slot>`);

define('dlg-combo', `
  :host{display:flex;flex:none;align-items:center;box-sizing:border-box;height:23px;padding-left:5px;border:1px solid #707070;border-radius:3px;background:linear-gradient(#f6f6f6,#e9e9e9 48%,#d4d4d4);position:relative;color:#222;}
  :host::after{content:"";position:absolute;right:5px;top:8px;border:4px solid transparent;border-top:4px solid #111;border-bottom:0;}
`, `<slot></slot>`);

define('tool-btn', `
  :host{display:flex;flex:none;align-items:center;justify-content:center;box-sizing:border-box;width:24px;height:22px;border:1px solid #777;border-radius:3px;background:linear-gradient(#f7f7f7,#ececec 50%,#cfcfcf);}
  :host([selected]){background:linear-gradient(#d6ecfa,#a9d4ee 50%,#5fa4d0);border-color:#1f5f8f;}
  :host([disabled]){background:#f2f2f2;border-color:#c4c4c4;}
`, `<slot></slot>`);

define('dlg-radio', `
  :host{display:inline-block;flex:none;box-sizing:border-box;width:12px;height:12px;border-radius:50%;border:1px solid #8f8f8f;background:radial-gradient(#eee,#ccc);box-shadow:0 0 0 1px #e0e0e0;position:relative;}
  :host([checked]){background:radial-gradient(circle closest-side at 50% 45%,#35a8d8,#0c5a88 62%,#e4e4e4 72%,#d4d4d4);}
`, ``);

define('dlg-button', `
  :host{display:flex;flex:none;align-items:center;justify-content:center;box-sizing:border-box;width:75px;height:19px;border:1px solid #6e6e6e;border-radius:3px;background:linear-gradient(#f6f6f6,#e6e6e6 50%,#cfcfcf);color:#111;}
  :host([disabled]){background:#f2f2f2;border-color:#c8c8c8;color:#a0a0a0;}
`, `<slot></slot>`);

define('value-field', `
  :host{display:flex;align-items:center;box-sizing:border-box;width:97px;height:17px;background:#fff;border-top:1px solid #aaa;border-left:0;font:12.5px "Liberation Sans",sans-serif;color:#222;padding-left:4px;position:absolute;}
  .a{position:absolute;right:0;top:0;bottom:0;width:14px;background:#e9e9e9;border:solid #d8d8d8;border-width:0 1px 1px 0;box-sizing:border-box;}
  .a::after{content:"";position:absolute;left:4px;top:4px;border:4px solid transparent;border-left:4px solid #666;border-right:0;}
`, `<slot></slot><span class="a"></span>`);

define('anno-layer', `
  :host{position:absolute;left:0;top:0;width:859px;height:624px;pointer-events:none;}
  svg{position:absolute;left:0;top:0;}
  .note{position:absolute;color:#ff3a3a;font-weight:300;white-space:nowrap;line-height:20px;font-size:16px;}
  .wm1{position:absolute;left:778px;top:589px;font-size:13.5px;color:#6b6f75;line-height:14px;height:14px;font-weight:300;white-space:nowrap;}
  .wm2{position:absolute;left:766px;top:606px;font:10px/11px "Liberation Mono",monospace;color:#5f636a;white-space:nowrap;}
`, () => {
  const petals = ['#1fb4d8', '#2aa8d0', '#e0189a', '#e8408c', '#e86a90', '#f07a3c', '#ef8a40', '#c8a070', '#a8a890', '#8fa8a8', '#30b8d8'];
  const logo = petals.map((c, i) => `<path transform="rotate(${i * 32.7} 752 600)" d="M752 588 l5 -1 l-2 8 l-3 0Z" fill="${c}"/>`).join('');
  return `
  <svg width="859" height="624" xmlns="http://www.w3.org/2000/svg">
    <g fill="#ff3a3a">
      <path d="M139 180.500 L160 170 L159 176 L346 187.500 L159 185 L159 192Z"/>
      <path d="M233 513 L230 490 L238 493 L352 190 L354 190 L247 496 L252 497Z"/>
      <path d="M747 284 L765 302 L760 303 L805 470 L803 470 L751 305 L744 307Z"/>
    </g>
    ${logo}
  </svg>
  <div class="note" style="left:361px;top:188px">可是这两个按钮都没反应，很纳闷啊！</div>
  <div class="note" style="left:716px;top:495px">想在这里面做螺纹</div>
  <div class="wm1">汇识学院</div>
  <div class="wm2">huishiatc.com</div>`;
});
</script>
</body>
</html>
